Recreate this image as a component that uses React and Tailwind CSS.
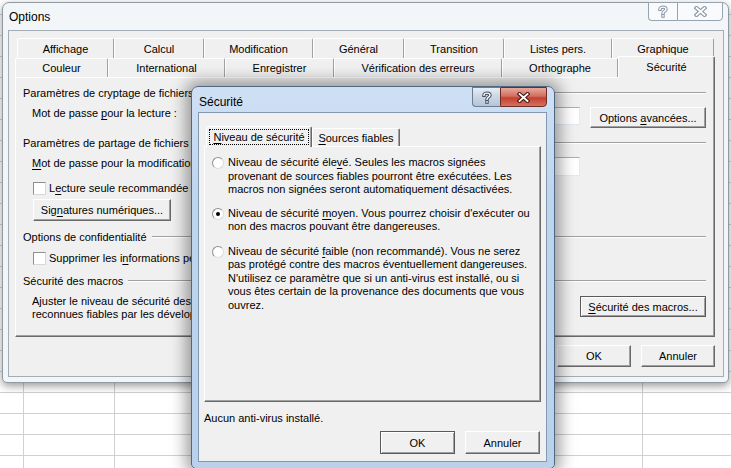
import React from 'react';

const Ul = ({ children }) => <span className="underline underline-offset-2">{children}</span>;

const Btn = ({ className = '', def = false, children }) => (
  <div
    className={`flex items-center justify-center bg-[#f0f0f0] whitespace-nowrap ${
      def
        ? 'border border-[#5a5a5a] shadow-[inset_1px_1px_0_#ffffff,inset_-1px_-1px_0_#a0a0a0]'
        : 'border border-t-white border-l-white border-r-[#696969] border-b-[#696969] shadow-[inset_-1px_-1px_0_#a0a0a0]'
    } ${className}`}
  >
    <span>{children}</span>
  </div>
);

const Field = ({ className = '' }) => (
  <div className={`bg-white border border-t-[#abadb3] border-l-[#dbdfe6] border-r-[#e3e9ef] border-b-[#e3e9ef] ${className}`} />
);

const Check = () => (
  <div className="w-[13px] h-[13px] shrink-0 bg-white border border-t-[#8e8f8f] border-l-[#8e8f8f] border-r-[#d8d8d8] border-b-[#d8d8d8]" />
);

const Radio = ({ on }) => (
  <div className="mt-[1px] w-[12px] h-[12px] shrink-0 rounded-full bg-white border border-t-[#8e8f8f] border-l-[#8e8f8f] border-r-[#dcdcdc] border-b-[#dcdcdc] flex items-center justify-center">
    {on && <div className="w-[4px] h-[4px] rounded-full bg-black" />}
  </div>
);

const Group = ({ children }) => (
  <div className="flex items-center h-[14px]">
    <span className="whitespace-nowrap">{children}</span>
    <div className="ml-[5px] flex-1 h-[2px] border-t border-t-[#a0a0a0] border-b border-b-white" />
  </div>
);

const BackTab = ({ className = '', children }) => (
  <div
    className={`h-full flex items-center justify-center whitespace-nowrap rounded-t-[2px] border-t border-l border-r border-t-white border-l-white border-r-[#a0a0a0] ${className}`}
  >
    {children}
  </div>
);

const Help = ({ active }) => (
  <svg width="10" height="13" viewBox="0 0 10 13">
    <path
      d="M2 4.2 C2 1.4 8 1.4 8 4.2 C8 6.2 5 6 5 8.3 M5 10.6 L5 11"
      fill="none"
      stroke={active ? '#3d4c5e' : '#8a96a3'}
      strokeWidth="3.4"
      strokeLinecap="square"
    />
    <path
      d="M2 4.2 C2 1.4 8 1.4 8 4.2 C8 6.2 5 6 5 8.3 M5 10.6 L5 11"
      fill="none"
      stroke="#ffffff"
      strokeWidth="1.4"
      strokeLinecap="square"
    />
  </svg>
);

const Close = ({ active }) => (
  <svg width="13" height="11" viewBox="0 0 13 11">
    <path d="M2.5 2 L10.5 9 M10.5 2 L2.5 9" fill="none" stroke={active ? '#4d1b16' : '#8a96a3'} strokeWidth="4" strokeLinecap="square" />
    <path d="M2.5 2 L10.5 9 M10.5 2 L2.5 9" fill="none" stroke="#ffffff" strokeWidth="1.8" strokeLinecap="square" />
  </svg>
);

const Sheet = () => (
  <div className="absolute inset-0 bg-white flex flex-col">
    <div className="h-[14px] shrink-0" />
    {Array.from({ length: 22 }).map((_, i) => (
      <div key={i} className="h-[21px] shrink-0 flex border-t border-t-[#d0d0d0]">
        <div className="w-[24px] border-r border-r-[#d0d0d0]" />
        <div className="w-[91px] border-r border-r-[#d0d0d0]" />
        <div className="w-[528px] border-r border-r-[#d0d0d0]" />
        <div className="flex-1" />
      </div>
    ))}
  </div>
);

const OptionsWindow = () => (
  <div className="absolute left-[2px] top-[2px] w-[727px] h-[381px] rounded-t-[7px] rounded-b-[5px] border border-[#9199a3] bg-[#f3f6f9] shadow-[0_3px_9px_rgba(0,0,0,0.4)] flex flex-col pl-[5px] pr-[4px] pb-[5px]">
    <div className="h-[27px] shrink-0 flex items-center pl-[1px] pt-[1px] text-[12px]">Options</div>
    <div className="absolute top-[-1px] right-[5px] flex h-[19px]">
      <div className="w-[29px] flex items-center justify-center border border-[#98a3b0] border-r-0 rounded-bl-[4px] bg-[#f8fafc]">
        <Help />
      </div>
      <div className="w-[46px] flex items-center justify-center border border-[#98a3b0] rounded-br-[4px] bg-[#f8fafc]">
        <Close />
      </div>
    </div>

    <div className="flex-1 bg-[#f0f0f0] border border-[#a3acb7] flex flex-col pl-[6px] pr-[7px] pt-[7px]">
      <div className="flex h-[20px] pl-[2px]">
        <BackTab className="w-[97px]">Affichage</BackTab>
        <BackTab className="w-[90px]">Calcul</BackTab>
        <BackTab className="w-[109px]">Modification</BackTab>
        <BackTab className="w-[91px]">Général</BackTab>
        <BackTab className="w-[100px]">Transition</BackTab>
        <BackTab className="w-[108px]">Listes pers.</BackTab>
        <BackTab className="w-[102px]">Graphique</BackTab>
      </div>
      <div className="flex h-[19px] items-end">
        <BackTab className="w-[93px]">Couleur</BackTab>
        <BackTab className="w-[117px]">International</BackTab>
        <BackTab className="w-[109px]">Enregistrer</BackTab>
        <BackTab className="w-[168px]">Vérification des erreurs</BackTab>
        <BackTab className="w-[116px]">Orthographe</BackTab>
        <div className="relative z-10 w-[97px] h-[22px] -mb-[1px] pb-[2px] flex items-center justify-center bg-[#f0f0f0] rounded-t-[2px] border-t border-l border-r border-t-white border-l-white border-r-[#696969] shadow-[inset_-1px_0_0_#a0a0a0]">
          Sécurité
        </div>
      </div>

      <div className="w-[700px] h-[260px] shrink-0 flex flex-col border border-t-white border-l-white border-r-[#696969] border-b-[#696969] shadow-[inset_-1px_-1px_0_#a0a0a0] pl-[7px] pr-[8px] pt-[8px]">
        <Group>Paramètres de cryptage de fichiers</Group>
        <div className="mt-[6px] flex justify-between">
          <span className="pl-[9px] whitespace-nowrap">
            Mot de passe <Ul>p</Ul>our la lecture :
          </span>
          <div className="flex gap-[10px]">
            <Field className="mt-[1px] w-[300px] h-[18px]" />
            <Btn className="mt-[1px] w-[116px] h-[21px]">
              Options <Ul>a</Ul>vancées...
            </Btn>
          </div>
        </div>

        <div className="mt-[8px]">
          <Group>Paramètres de partage de fichiers</Group>
        </div>
        <div className="mt-[6px] flex justify-between">
          <span className="ml-[9px] w-[160px] overflow-hidden whitespace-nowrap">
            <Ul>M</Ul>ot de passe pour la modification :
          </span>
          <Field className="mt-[1px] mr-[126px] w-[300px] h-[19px]" />
        </div>
        <div className="mt-[5px] flex items-center pl-[10px] gap-[3px] h-[14px]">
          <Check />
          <span>
            L<Ul>e</Ul>cture seule recommandée
          </span>
        </div>
        <Btn className="mt-[4px] ml-[10px] w-[138px] h-[22px]">
          Sig<Ul>n</Ul>atures numériques...
        </Btn>

        <div className="mt-[9px]">
          <Group>Options de confidentialité</Group>
        </div>
        <div className="mt-[7px] flex items-center pl-[10px] gap-[3px] h-[14px]">
          <Check />
          <span className="w-[142px] overflow-hidden whitespace-nowrap">
            Supprimer les i<Ul>n</Ul>formations personnelles
          </span>
        </div>

        <div className="mt-[9px]">
          <Group>Sécurité des macros</Group>
        </div>
        <div className="mt-[7px] flex justify-between">
          <div className="ml-[9px] w-[159px] overflow-hidden leading-[13px] whitespace-nowrap">
            <div>Ajuster le niveau de sécurité des fichiers</div>
            <div>reconnues fiables par les développeurs</div>
          </div>
          <Btn def className="mt-[1px] w-[126px] h-[21px]">
            <Ul>S</Ul>écurité des macros...
          </Btn>
        </div>
      </div>

      <div className="mt-[8px] flex justify-end gap-[10px] pr-[1px]">
        <Btn className="w-[74px] h-[22px]">OK</Btn>
        <Btn className="w-[74px] h-[22px]">Annuler</Btn>
      </div>
    </div>
  </div>
);

const SecuriteWindow = () => (
  <div className="absolute left-[191px] top-[86px] w-[364px] h-[383px] rounded-t-[7px] rounded-b-[5px] border border-[#4f6782] bg-[linear-gradient(to_bottom,#cfe0f4,#bed5ee_30%,#b9d1ea)] shadow-[0_0_16px_5px_rgba(0,0,0,0.38)] flex flex-col pl-[6px] pr-[7px] pb-[6px]">
    <div className="h-[25px] shrink-0 flex items-center pl-[1px] pt-[4px] text-[12px]">Sécurité</div>
    <div className="absolute top-0 right-[7px] flex h-[20px]">
      <div className="w-[28px] flex items-center justify-center border border-[#6b7d92] border-r-0 rounded-bl-[4px] bg-[linear-gradient(to_bottom,#e6edf5,#cad6e3_50%,#b6c5d6)]">
        <Help active />
      </div>
      <div className="w-[47px] flex items-center justify-center border border-[#6e2c25] rounded-br-[4px] bg-[linear-gradient(to_bottom,#e8a899,#d27061_45%,#c4402f_55%,#d5725f)]">
        <Close active />
      </div>
    </div>

    <div className="flex-1 bg-[#f0f0f0] border border-[#8398b0] flex flex-col pl-[5px] pr-[5px] pt-[13px]">
      <div className="flex h-[20px] items-end pl-[2px]">
        <div className="relative z-10 w-[106px] h-[21px] -mb-[1px] px-[2px] pt-[2px] pb-[2px] bg-[#f0f0f0] rounded-t-[2px] border-t border-l border-r border-t-white border-l-white border-r-[#696969] shadow-[inset_-1px_0_0_#a0a0a0]">
          <div className="h-full flex items-center justify-center border border-dotted border-black">
            <span>
              <Ul>N</Ul>iveau de sécurité
            </span>
          </div>
        </div>
        <div className="w-[88px] h-[18px] flex items-center justify-center rounded-t-[2px] border-t border-l border-r border-t-white border-l-white border-r-[#696969] shadow-[inset_-1px_0_0_#a0a0a0]">
          <span>
            <Ul>S</Ul>ources fiables
          </span>
        </div>
      </div>

      <div className="w-[337px] h-[256px] shrink-0 border border-t-white border-l-white border-r-[#696969] border-b-[#696969] shadow-[inset_-1px_-1px_0_#a0a0a0] pl-[7px] pt-[9px] leading-[13.5px] flex flex-col">
        <div className="flex gap-[4px]">
          <Radio />
          <div>
            Niveau de sécurité éle<Ul>v</Ul>é. Seules les macros signées
            <br />
            provenant de sources fiables pourront être exécutées. Les
            <br />
            macros non signées seront automatiquement désactivées.
          </div>
        </div>
        <div className="mt-[10px] flex gap-[4px]">
          <Radio on />
          <div>
            Niveau de sécurité <Ul>m</Ul>oyen. Vous pourrez choisir d'exécuter ou
            <br />
            non des macros pouvant être dangereuses.
          </div>
        </div>
        <div className="mt-[11px] flex gap-[4px]">
          <Radio />
          <div>
            Niveau de sécurité <Ul>f</Ul>aible (non recommandé). Vous ne serez
            <br />
            pas protégé contre des macros éventuellement dangereuses.
            <br />
            N'utilisez ce paramètre que si un anti-virus est installé, ou si
            <br />
            vous êtes certain de la provenance des documents que vous
            <br />
            ouvrez.
          </div>
        </div>
      </div>

      <div className="mt-[9px] h-[14px] whitespace-nowrap">Aucun anti-virus installé.</div>
      <div className="mt-[6px] flex justify-end gap-[10px] pr-[1px]">
        <Btn def className="w-[75px] h-[23px]">OK</Btn>
        <Btn className="w-[75px] h-[23px]">Annuler</Btn>
      </div>
    </div>
  </div>
);

export default function App() {
  return (
    <div className="relative w-[731px] h-[468px] overflow-hidden font-['Liberation_Sans',Arial,sans-serif] text-[11px] leading-[14px] text-black">
      <Sheet />
      <OptionsWindow />
      <SecuriteWindow />
    </div>
  );
}
